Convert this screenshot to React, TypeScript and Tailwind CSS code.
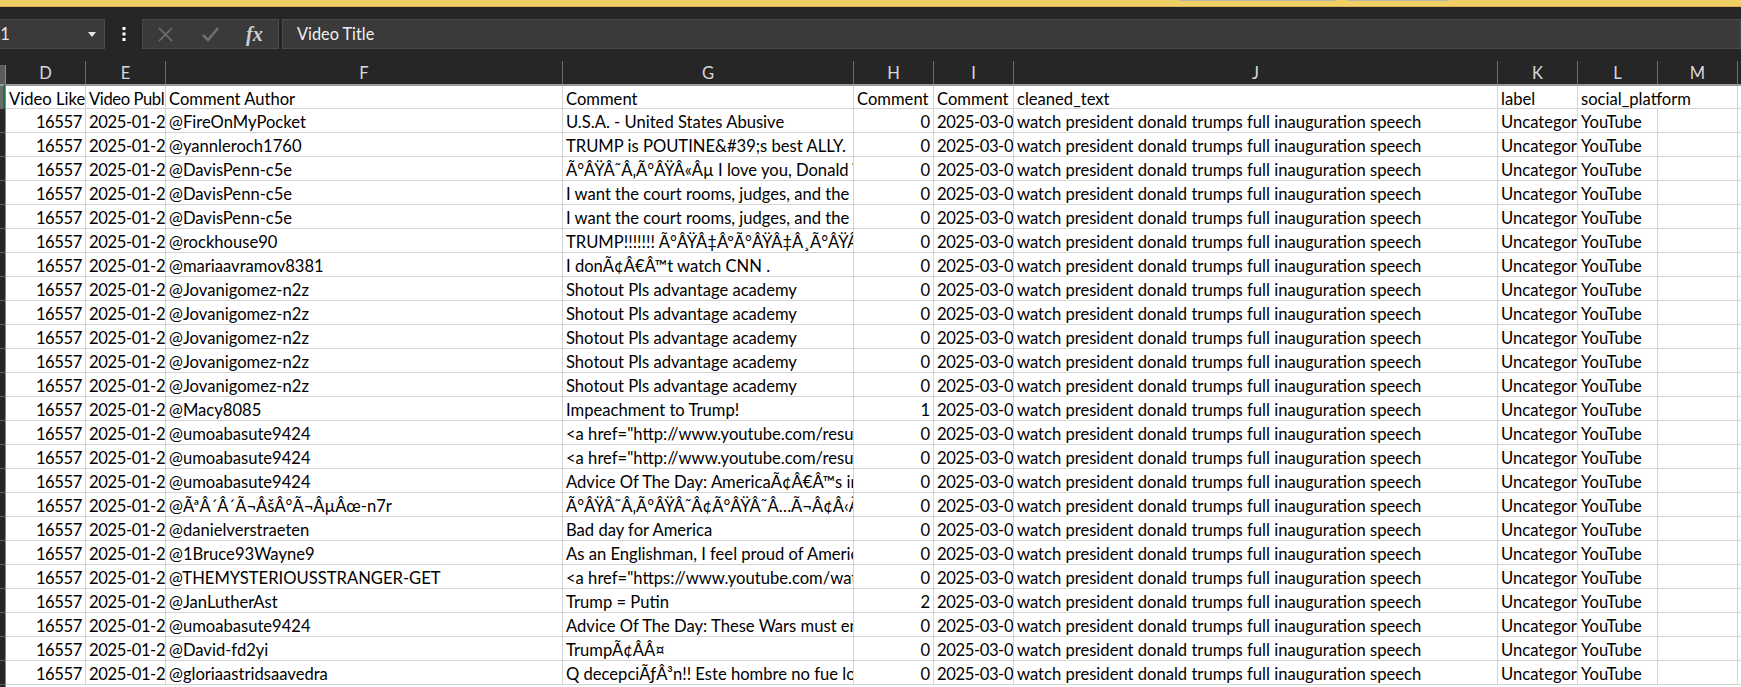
import React from "react";

const cols = [
  { w: 80 }, { w: 80 }, { w: 397 }, { w: 291 }, { w: 80 }, { w: 80 }, { w: 484 }, { w: 80 }, { w: 80 }, { w: 80 },
];
const title = "watch president donald trumps full inauguration speech";
const rows: [string, string, string][] = [
  ["@FireOnMyPocket", "U.S.A. - United States Abusive", "0"],
  ["@yannleroch1760", "TRUMP is POUTINE&#39;s best ALLY.  t", "0"],
  ["@DavisPenn-c5e", "Ã°ÂŸÂ˜Â‚Ã°ÂŸÂ«Âµ I love you, Donald Trump", "0"],
  ["@DavisPenn-c5e", "I want the court rooms, judges, and the", "0"],
  ["@DavisPenn-c5e", "I want the court rooms, judges, and the", "0"],
  ["@rockhouse90", "TRUMP!!!!!!! Ã°ÂŸÂ‡ÂºÃ°ÂŸÂ‡Â¸Ã°ÂŸÂ‡ÂºÃ°ÂŸ", "0"],
  ["@mariaavramov8381", "I donÃ¢Â€Â™t watch CNN .", "0"],
  ["@Jovanigomez-n2z", "Shotout Pls advantage academy", "0"],
  ["@Jovanigomez-n2z", "Shotout Pls advantage academy", "0"],
  ["@Jovanigomez-n2z", "Shotout Pls advantage academy", "0"],
  ["@Jovanigomez-n2z", "Shotout Pls advantage academy", "0"],
  ["@Jovanigomez-n2z", "Shotout Pls advantage academy", "0"],
  ["@Macy8085", "Impeachment to Trump!", "1"],
  ["@umoabasute9424", "<a href=\"http://www.youtube.com/results", "0"],
  ["@umoabasute9424", "<a href=\"http://www.youtube.com/results", "0"],
  ["@umoabasute9424", "Advice Of The Day: AmericaÃ¢Â€Â™s in", "0"],
  ["@ÃªÂ´Â´Ã¬ÂšÂ°Ã¬ÂµÂœ-n7r", "Ã°ÂŸÂ˜Â‚Ã°ÂŸÂ˜Â¢Ã°ÂŸÂ˜Â…Ã¬Â¢Â‹Ã¬Â¢Â‹Ã¬", "0"],
  ["@danielverstraeten", "Bad day for America", "0"],
  ["@1Bruce93Wayne9", "As an Englishman, I feel proud of America", "0"],
  ["@THEMYSTERIOUSSTRANGER-GET", "<a href=\"https://www.youtube.com/watch", "0"],
  ["@JanLutherAst", "Trump = Putin", "2"],
  ["@umoabasute9424", "Advice Of The Day: These Wars must end", "0"],
  ["@David-fd2yi", "TrumpÃ¢ÂÂ¤", "0"],
  ["@gloriaastridsaavedra", "Q decepciÃƒÂ³n!! Este hombre no fue lo", "0"],
];
const letters = ["D", "E", "F", "G", "H", "I", "J", "K", "L", "M"];
const header = ["Video Likes", "Video Publ", "Comment Author", "Comment", "Comment", "Comment", "cleaned_text", "label", "social_platform", ""];

function Cell({ w, right, over, tight, children }: { w: number; right?: boolean; over?: boolean; tight?: boolean; children?: React.ReactNode }) {
  return (
    <div
      className={`h-full shrink-0 border-r border-b border-[#d4d4d4] px-[3px] leading-[27px] whitespace-pre ${over ? "overflow-visible border-r-white" : "overflow-hidden"} ${right ? "text-right" : ""} ${tight ? "tracking-[-0.4px]" : ""}`}
      style={{ width: w }}
    >
      {children}
    </div>
  );
}

export default function App() {
  return (
    <div className="h-[687px] w-[1741px] overflow-hidden bg-[#262626] font-['Lato','Liberation_Sans',sans-serif]">
      <div className="relative h-[7px] border-b border-[#e0b050] bg-[#f0cf65]">
        <div className="absolute top-0 left-[1179px] h-px w-[157px] bg-[#b9b6ab]" />
        <div className="absolute top-0 left-[1347px] h-px w-[102px] bg-[#b9b6ab]" />
      </div>
      <div className="mt-[12px] flex h-[30px] items-stretch">
        <div className="flex w-[105px] items-center justify-between overflow-hidden border border-l-0 border-[#4a4a4a] bg-[#3a3a3a] pr-[8px] text-[16.5px] text-[#e6e6e6]">
          <span className="-ml-[11px]">A1</span>
          <svg width="8" height="5" viewBox="0 0 8 5"><path d="M0 0h8L4 5z" fill="#e6e6e6" /></svg>
        </div>
        <div className="flex w-[37px] items-center justify-center">
          <svg width="4" height="14" viewBox="0 0 4 14" fill="#ffffff"><rect x="0.5" y="0" width="3" height="3" /><rect x="0.5" y="5.5" width="3" height="3" /><rect x="0.5" y="11" width="3" height="3" /></svg>
        </div>
        <div className="flex w-[137px] items-center border border-[#4a4a4a] bg-[#3a3a3a]">
          <svg className="ml-[15px]" width="15" height="15" viewBox="0 0 15 15" fill="none" stroke="#6f6f6f" strokeWidth="1.7"><path d="M1 1l13 13M14 1L1 14" /></svg>
          <svg className="ml-[29px]" width="18" height="15" viewBox="0 0 18 15" fill="none" stroke="#6f6f6f" strokeWidth="2.6"><path d="M1 8l5 5L16 1" /></svg>
          <span className="ml-[26px] font-['Liberation_Serif',serif] text-[20px] leading-none font-bold text-[#d0d0d0] italic">fx</span>
        </div>
        <div className="ml-[3px] flex flex-1 items-center border border-[#4a4a4a] bg-[#3a3a3a] pl-[14px] text-[16.3px] text-[#f0f0f0]">Video Title</div>
      </div>
      <div className="mt-[12px] flex h-[23px]">
        <div className="mt-[4px] w-[6px] shrink-0 border-r border-[#8a8a8a] bg-[#5c5c5c]" />
        {cols.map((c, i) => (
          <div key={i} className="flex shrink-0 items-center justify-center border-r border-[#6e6e6e] pt-[2px] text-[16.5px] text-[#d9d9d9]" style={{ width: c.w }}>{letters[i]}</div>
        ))}
      </div>
      <div className="flex h-[603px]">
        <div className="w-[6px] shrink-0 border-r border-[#8a8a8a]">
          <div className="h-[25px] border-t-2 border-r-2 border-t-[#9a9a9a] border-r-[#1e7145] bg-[#6a6a6a]" />
          {rows.map((r, i) => (
            <div key={i} className="h-[24px] border-b border-[#5a5a5a]" />
          ))}
        </div>
        <div className="flex-1 overflow-hidden border-t-2 border-[#9a9a9a] bg-white text-[16.6px] text-black">
          <div className="flex h-[23px]">
            {cols.map((c, i) => <Cell key={i} w={c.w} over={i === 8} tight={i === 1}>{header[i]}</Cell>)}
            <Cell w={10} />
          </div>
          {rows.map((r, i) => (
            <div key={i} className="flex h-[24px]">
              <Cell w={80} right tight>16557</Cell>
              <Cell w={80} tight>2025-01-2</Cell>
              <Cell w={397}>{r[0]}</Cell>
              <Cell w={291}>{r[1]}</Cell>
              <Cell w={80} right>{r[2]}</Cell>
              <Cell w={80} tight>2025-03-0</Cell>
              <Cell w={484}>{title}</Cell>
              <Cell w={80}>Uncategorized</Cell>
              <Cell w={80}>YouTube</Cell>
              <Cell w={80} />
              <Cell w={10} />
            </div>
          ))}
        </div>
      </div>
    </div>
  );
}
